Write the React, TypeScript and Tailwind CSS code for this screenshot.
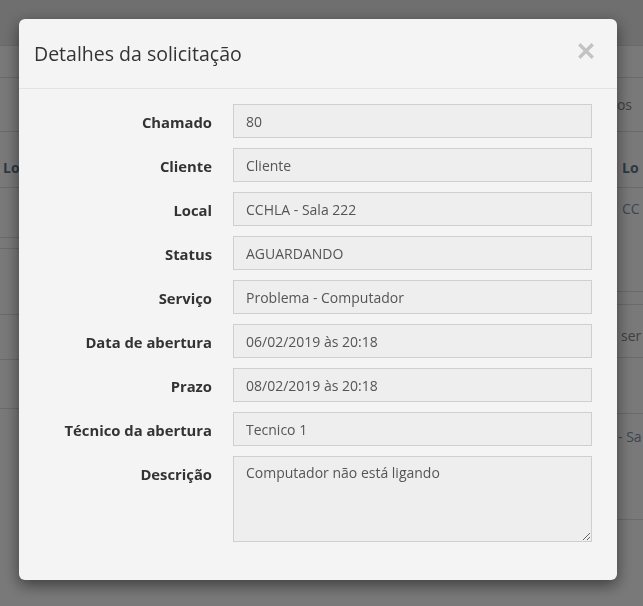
import React from 'react';

const fields: { label: string; value: string }[] = [
  { label: 'Chamado', value: '80' },
  { label: 'Cliente', value: 'Cliente' },
  { label: 'Local', value: 'CCHLA - Sala 222' },
  { label: 'Status', value: 'AGUARDANDO' },
  { label: 'Serviço', value: 'Problema - Computador' },
  { label: 'Data de abertura', value: '06/02/2019 às 20:18' },
  { label: 'Prazo', value: '08/02/2019 às 20:18' },
  { label: 'Técnico da abertura', value: 'Tecnico 1' },
];

function CloseIcon() {
  return (
    <svg width="16" height="16" viewBox="0 0 16 16" aria-hidden="true">
      <path d="M2.5 2.5 L13.5 13.5 M13.5 2.5 L2.5 13.5" stroke="#c3c3c3" strokeWidth="3.4" strokeLinecap="square" />
    </svg>
  );
}

// the page behind the backdrop (only its edges show)
function BackgroundPage() {
  return (
    <div className="h-screen overflow-hidden bg-[#f2f2f2] text-[14px] font-['Open_Sans',sans-serif]">
      <div className="h-[45px] bg-[#dedede]" />
      <div className="h-[32px] border-t border-[#d4d4d4]" />
      <div className="h-[54px] border-t border-[#d4d4d4] flex items-center justify-end pr-[11px] text-[#808080]">
        Campos
      </div>
      <div className="flex">
        <div className="w-[614px] shrink-0">
          <div className="h-[56px] border-t border-[#d4d4d4] flex items-end pb-[9px] pl-[3px] font-bold text-[#5d7188]">
            Local
          </div>
          <div className="h-[50px] border-t border-[#d4d4d4]" />
          <div className="h-[11px] border-t border-[#d4d4d4]" />
          <div className="h-[66px] border-t border-[#d4d4d4]" />
          <div className="h-[45px] border-t border-[#d4d4d4]" />
          <div className="h-[50px] border-t border-b border-[#d4d4d4]" />
        </div>
        <div className="flex-1 min-w-0 whitespace-nowrap">
          <div className="h-[56px] border-t border-[#d4d4d4] flex items-end pb-[9px] pl-[8px] font-bold text-[#5d7188]">
            Lo
          </div>
          <div className="h-[104px] border-t border-[#d4d4d4] pt-[10px] pl-[8px] text-[#7a8ca2]">CC</div>
          <div className="h-[13px] border-t border-[#d4d4d4]" />
          <div className="h-[53px] border-t border-[#d4d4d4] pt-[20px] pl-[7px] text-[#808080]">ser</div>
          <div className="h-[56px] border-t border-[#d4d4d4]" />
          <div className="h-[107px] border-t border-b border-[#d4d4d4] pt-[12px] pl-[4px] text-[#7a8ca2]">- Sa</div>
        </div>
      </div>
    </div>
  );
}

export default function App() {
  return (
    <div className="relative">
      <BackgroundPage />

      {/* Modal */}
      <div className="fixed inset-0 bg-black/50 pt-[19px] pl-[19px] font-['Open_Sans',sans-serif]">
        <div className="w-[598px] rounded-[6px] bg-[#f4f4f4] shadow-[0_5px_15px_rgba(0,0,0,0.5)]">
          <div className="h-[70px] flex items-center justify-between pl-[15px] pr-[23px] border-b border-[#e3e3e3]">
            <h4 className="text-[19.5px] leading-[28px] text-[#333] mt-0">Detalhes da solicitação</h4>
            <button className="-mt-[6px]" aria-label="Fechar">
              <CloseIcon />
            </button>
          </div>

          <div className="pt-[15px] pb-[38px] pl-[15px] pr-[25px] flex flex-col gap-[10px]">
            {fields.map((f) => (
              <div key={f.label} className="flex gap-[21px]">
                <label className="w-[178px] shrink-0 text-right pt-[8px] text-[14.8px] leading-[20px] font-bold text-[#333]">
                  {f.label}
                </label>
                <input
                  readOnly
                  value={f.value}
                  className="flex-1 h-[34px] px-[12px] border border-[#cfcfcf] bg-[#eeeeee] text-[14px] text-[#555] outline-none"
                />
              </div>
            ))}
            <div className="flex gap-[21px]">
              <label className="w-[178px] shrink-0 text-right pt-[8px] text-[14.8px] leading-[20px] font-bold text-[#333]">
                Descrição
              </label>
              <textarea
                readOnly
                value="Computador não está ligando"
                className="flex-1 h-[86px] px-[12px] pt-[6px] pb-[6px] border border-[#cfcfcf] bg-[#eeeeee] text-[14px] leading-[20px] text-[#555] outline-none"
              />
            </div>
          </div>
        </div>
      </div>
    </div>
  );
}
